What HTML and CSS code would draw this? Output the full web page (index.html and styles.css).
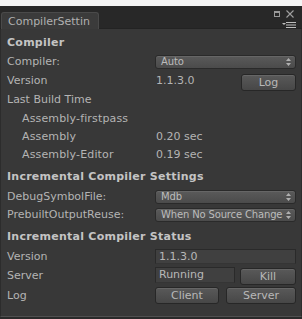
FILE: index.html
```html
<!DOCTYPE html>
<html lang="en">
<head>
  <meta charset="UTF-8" />
  <meta name="viewport" content="width=device-width, initial-scale=1.0" />
  <title>CompilerSettings</title>
  <link rel="stylesheet" href="styles.css">
</head>
<body>
  <div class="window">
    <div class="topstrip"></div>
    <div class="tabbar">
      <div class="tab">CompilerSettin</div>
      <div class="win-tools">
        <div class="win-buttons">
          <svg class="icon-max" width="6" height="6" viewBox="0 0 6 6">
            <rect x="0.5" y="0.5" width="5" height="5" fill="none" stroke="#9a9a9a" />
            <rect x="0" y="0" width="6" height="2" fill="#9a9a9a" />
          </svg>
          <svg class="icon-close" width="8" height="8" viewBox="0 0 8 8">
            <path d="M0.5 0.5 L7.5 7.5 M7.5 0.5 L0.5 7.5" stroke="#a0a0a0" stroke-width="1.1" />
          </svg>
        </div>
        <svg class="icon-menu" width="14" height="6" viewBox="0 0 14 6">
          <path d="M0 1 L4 1 L2 3 Z" fill="#bdbdbd" />
          <rect x="4" y="0" width="10" height="1" fill="#bdbdbd" />
          <rect x="4" y="2.5" width="10" height="1" fill="#bdbdbd" />
          <rect x="4" y="5" width="10" height="1" fill="#bdbdbd" />
        </svg>
      </div>
    </div>

    <div class="panel">
      <div class="row header first">Compiler</div>
      <div class="row">
        <span class="label">Compiler:</span>
        <div class="popup"><span>Auto</span><svg class="arrows" width="5" height="8" viewBox="0 0 5 8"><path d="M0 3 L2.5 0 L5 3 Z M0 5 L2.5 8 L5 5 Z" fill="#b0b0b0" /></svg></div>
      </div>
      <div class="row tall">
        <span class="label">Version</span>
        <div class="field-line">
          <span class="value">1.1.3.0</span>
          <button class="btn btn-log">Log</button>
        </div>
      </div>
      <div class="row build">
        <span class="label">Last Build Time</span>
      </div>
      <div class="row">
        <span class="label indent">Assembly-firstpass</span>
      </div>
      <div class="row">
        <span class="label indent">Assembly</span>
        <span class="value">0.20 sec</span>
      </div>
      <div class="row">
        <span class="label indent">Assembly-Editor</span>
        <span class="value">0.19 sec</span>
      </div>

      <div class="row header">Incremental Compiler Settings</div>
      <div class="row">
        <span class="label">DebugSymbolFile:</span>
        <div class="popup"><span>Mdb</span><svg class="arrows" width="5" height="8" viewBox="0 0 5 8"><path d="M0 3 L2.5 0 L5 3 Z M0 5 L2.5 8 L5 5 Z" fill="#b0b0b0" /></svg></div>
      </div>
      <div class="row">
        <span class="label">PrebuiltOutputReuse:</span>
        <div class="popup"><span>When No Source Change</span><svg class="arrows" width="5" height="8" viewBox="0 0 5 8"><path d="M0 3 L2.5 0 L5 3 Z M0 5 L2.5 8 L5 5 Z" fill="#b0b0b0" /></svg></div>
      </div>

      <div class="row header">Incremental Compiler Status</div>
      <div class="row">
        <span class="label">Version</span>
        <div class="textfield">1.1.3.0</div>
      </div>
      <div class="row tall">
        <span class="label">Server</span>
        <div class="field-line">
          <div class="textfield short">Running</div>
          <button class="btn btn-kill">Kill</button>
        </div>
      </div>
      <div class="row tall">
        <span class="label">Log</span>
        <div class="field-line">
          <button class="btn btn-client">Client</button>
          <button class="btn btn-server">Server</button>
        </div>
      </div>
    </div>
  </div>
</body>
</html>
```

FILE: styles.css
```css
html, body {
  margin: 0;
  padding: 0;
  background: #383838;
}
body {
  font-family: "DejaVu Sans", "Liberation Sans", sans-serif;
  font-size: 11px;
  color: #b4b4b4;
  width: 302px;
  height: 319px;
  overflow: hidden;
}
.window {
  display: flex;
  flex-direction: column;
  height: 319px;
}
.topstrip {
  height: 6px;
  background: #f4f4f4;
}
.tabbar {
  height: 23px;
  background: #282828;
  display: flex;
  justify-content: space-between;
  box-sizing: border-box;
  border-bottom: 1px solid #232323;
}
.tab {
  margin-top: 6px;
  margin-left: 1px;
  width: 98px;
  height: 17px;
  box-sizing: border-box;
  padding-left: 6px;
  line-height: 17px;
  background: #3b3b3b;
  border: 1px solid #4a4a4a;
  border-bottom: none;
  border-radius: 3px 3px 0 0;
  color: #b0b0b0;
  white-space: nowrap;
  overflow: hidden;
}
.win-tools {
  display: flex;
  flex-direction: column;
  align-items: flex-end;
  padding: 4px 6px 0 0;
  gap: 4px;
}
.win-buttons {
  display: flex;
  align-items: center;
  gap: 6px;
  margin-right: 2px;
  height: 8px;
}
.icon-menu {
  display: block;
}
.panel {
  flex: 1;
  padding: 4px 5px 0 6px;
  border-left: 1px solid #2c2c2c;
  border-right: 1px solid #2c2c2c;
  border-bottom: 1px solid #505050;
  box-shadow: 0 2px 0 #2a2a2a;
  margin-bottom: 2px;
}
.row {
  display: flex;
  align-items: center;
  height: 18px;
}
.row.tall {
  height: 20px;
}
.row.build {
  height: 19px;
}
.header {
  font-weight: bold;
  color: #c4c4c4;
  letter-spacing: 0.25px;
  height: 24px;
  padding-top: 3px;
  box-sizing: border-box;
}
.header.first {
  height: 19px;
  padding-top: 0;
}
.label {
  width: 148px;
  flex-shrink: 0;
  white-space: nowrap;
}
.label.indent {
  padding-left: 15px;
  box-sizing: border-box;
  letter-spacing: 0.15px;
}
.value {
  padding-left: 1px;
}
.field-line {
  flex: 1;
  display: flex;
  align-items: center;
  justify-content: space-between;
}
.popup {
  flex: 1;
  height: 14px;
  margin-top: 1px;
  box-sizing: border-box;
  display: flex;
  align-items: center;
  justify-content: space-between;
  padding: 0 4px 0 5px;
  font-size: 10px;
  letter-spacing: -0.15px;
  color: #bcbcbc;
  background: linear-gradient(#5a5a5a, #4b4b4b);
  border: 1px solid #2a2a2a;
  border-radius: 3px;
  box-shadow: inset 0 1px 0 #666;
  white-space: nowrap;
}
.arrows {
  flex-shrink: 0;
}
.btn {
  font-family: inherit;
  font-size: 11px;
  color: #b8b8b8;
  height: 17px;
  padding: 0;
  box-sizing: border-box;
  background: linear-gradient(#595959, #474747);
  border: 1px solid #272727;
  border-radius: 3px;
  box-shadow: inset 0 1px 0 #666;
}
.btn-log {
  width: 55px;
  margin-top: 4px;
}
.btn-kill {
  width: 56px;
  margin-top: 2px;
}
.btn-client {
  width: 64px;
}
.btn-server {
  width: 70px;
}
.textfield {
  flex: 1;
  height: 15px;
  box-sizing: border-box;
  padding-left: 3px;
  line-height: 13px;
  background: #404040;
  border: 1px solid #2a2a2a;
  border-bottom-color: #353535;
  color: #b8b8b8;
}
.textfield.short {
  flex: none;
  width: 80px;
  height: 16px;
  line-height: 14px;
}
```
